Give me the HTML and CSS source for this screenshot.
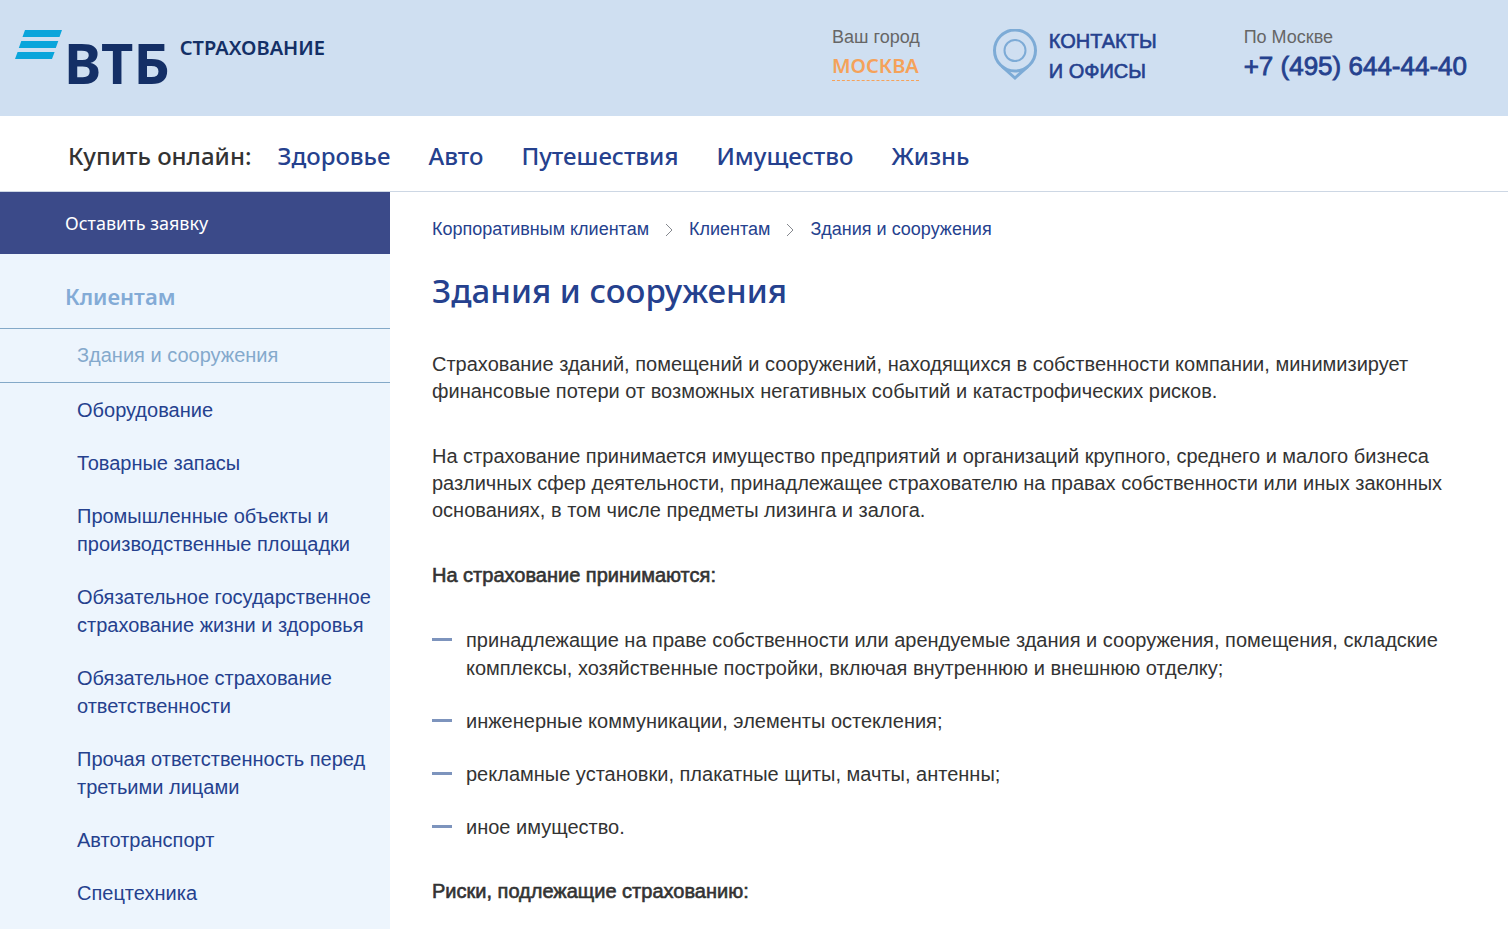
FILE: index.html
```
<!DOCTYPE html>
<html lang="ru">
<head>
<meta charset="utf-8">
<meta name="viewport" content="width=device-width, initial-scale=1">
<title>Здания и сооружения — ВТБ Страхование</title>
<link rel="stylesheet" href="styles.css">
</head>
<body>
<header class="header">
  <a class="logo" href="#">
    <svg class="logo-mark" width="48" height="30" viewBox="0 0 48 30" aria-hidden="true">
      <path d="M10 0H47L44.500 7H7.500ZM6.300 11H43.300L40.800 18H3.800ZM2.600 22H39.600L37 29H0Z" fill="#0aa5db"/>
    </svg>
    <span class="logo-name">ВТБ</span>
    <span class="logo-sub">СТРАХОВАНИЕ</span>
  </a>
  <div class="city">
    <span class="caption">Ваш город</span>
    <a class="city-link" href="#">МОСКВА</a>
  </div>
  <a class="contacts" href="#">
    <svg class="pin" width="44" height="52" viewBox="0 0 44 52" fill="none" stroke="#7dabd6" aria-hidden="true">
      <circle cx="22" cy="21.500" r="20.500" stroke-width="3"/>
      <circle cx="22" cy="21.500" r="10.500" stroke-width="2"/>
      <path d="M9 37.500L22 49L35 37.500" stroke-width="3"/>
    </svg>
    <span>КОНТАКТЫ<br>И ОФИСЫ</span>
  </a>
  <div class="phone">
    <span class="caption">По Москве</span>
    <a class="phone-link" href="tel:+74956444440">+7 (495) 644-44-40</a>
  </div>
</header>
<nav class="nav" aria-label="Купить онлайн">
  <span class="nav-title">Купить онлайн:</span>
  <a href="#">Здоровье</a>
  <a href="#">Авто</a>
  <a href="#">Путешествия</a>
  <a href="#">Имущество</a>
  <a href="#">Жизнь</a>
</nav>
<div class="layout">
  <aside class="sidebar">
    <a class="request" href="#">Оставить заявку</a>
    <h2 class="side-title">Клиентам</h2>
    <ul class="menu">
      <li class="active"><a href="#" aria-current="page">Здания и сооружения</a></li>
      <li><a href="#">Оборудование</a></li>
      <li><a href="#">Товарные запасы</a></li>
      <li><a href="#">Промышленные объекты и производственные площадки</a></li>
      <li><a href="#">Обязательное государственное страхование жизни и здоровья</a></li>
      <li><a href="#">Обязательное страхование ответственности</a></li>
      <li><a href="#">Прочая ответственность перед третьими лицами</a></li>
      <li><a href="#">Автотранспорт</a></li>
      <li><a href="#">Спецтехника</a></li>
    </ul>
  </aside>
  <main class="content">
    <nav class="crumbs" aria-label="Навигация">
      <a href="#">Корпоративным клиентам</a>
      <svg width="8" height="14" viewBox="0 0 8 14" aria-hidden="true"><path d="M1 1L7 7L1 13" fill="none" stroke="#85888e"/></svg>
      <a href="#">Клиентам</a>
      <svg width="8" height="14" viewBox="0 0 8 14" aria-hidden="true"><path d="M1 1L7 7L1 13" fill="none" stroke="#85888e"/></svg>
      <a href="#">Здания и сооружения</a>
    </nav>
    <h1>Здания и сооружения</h1>
    <p>Страхование зданий, помещений и сооружений, находящихся в собственности компании, минимизирует финансовые потери от возможных негативных событий и катастрофических рисков.</p>
    <p>На страхование принимается имущество предприятий и организаций крупного, среднего и малого бизнеса различных сфер деятельности, принадлежащее страхователю на правах собственности или иных законных основаниях, в том числе предметы лизинга и залога.</p>
    <h3>На страхование принимаются:</h3>
    <ul class="dashes">
      <li>принадлежащие на праве собственности или арендуемые здания и сооружения, помещения, складские комплексы, хозяйственные постройки, включая внутреннюю и внешнюю отделку;</li>
      <li>инженерные коммуникации, элементы остекления;</li>
      <li>рекламные установки, плакатные щиты, мачты, антенны;</li>
      <li>иное имущество.</li>
    </ul>
    <h3>Риски, подлежащие страхованию:</h3>
  </main>
</div>
</body>
</html>
```
FILE: styles.css
```
* { box-sizing: border-box; }
body {
  margin: 0;
  background: #fff;
  color: #333;
  font: 20px/27px "Liberation Sans", Arial, sans-serif;
}
a { color: #25418e; text-decoration: none; }
ul { list-style: none; margin: 0; padding: 0; }

.header {
  display: flex;
  align-items: flex-start;
  height: 116px;
  padding: 24px 41px 0 15px;
  background: #cfdff1;
}
.logo {
  display: flex;
  align-items: flex-start;
  margin-right: auto;
  color: #142f66;
  font-family: "Noto Sans", sans-serif;
  font-weight: 700;
}
.logo-mark { margin: 6px 1px 0 0; }
.logo-name { font-size: 56px; line-height: 76px; }
.logo-sub { margin-left: 10px; font-size: 20px; line-height: 48px; font-weight: 600; }
.caption { display: block; color: #666; font-size: 18px; line-height: 26px; }
.city { margin-right: 73px; }
.city-link {
  display: inline-block;
  padding-top: 2px;
  border-bottom: 1px dashed #f5a25a;
  color: #f5a25a;
  font: 600 20px/28px "Noto Sans", sans-serif;
}
.contacts {
  display: flex;
  gap: 12px;
  margin-right: 87px;
  font-size: 20px;
  line-height: 30px;
  -webkit-text-stroke: 0.03em;
}
.contacts span { padding-top: 2px; }
.pin { margin-top: 5px; }
.phone-link { display: block; font-size: 26px; line-height: 32px; -webkit-text-stroke: 0.03em; }

.nav {
  display: flex;
  align-items: center;
  gap: 38px;
  height: 76px;
  padding: 4px 68px 0;
  border-bottom: 1px solid #cdd7e4;
  font: 500 24px/36px "Noto Sans", sans-serif;
}
.nav-title { margin-right: -12px; }

.layout { display: grid; grid-template-columns: 390px 1fr; }
.sidebar { padding-bottom: 24px; background: #edf5fd; }
.request {
  display: block;
  padding: 0 65px;
  background: #3b4a89;
  color: #fff;
  font: 18px/62px "Noto Sans", sans-serif;
}
.side-title {
  margin: 0;
  padding: 24px 65px 14px;
  color: #83abd6;
  font: 600 22px/36px "Noto Sans", sans-serif;
}
.menu li { padding: 0 16px 25px 77px; line-height: 28px; }
.menu .active {
  margin-bottom: 13px;
  padding-top: 12px;
  padding-bottom: 13px;
  border-top: 1px solid #84a9c8;
  border-bottom: 1px solid #84a9c8;
}
.menu .active a { color: #84a9cc; }

.content { padding: 24px 60px 24px 42px; }
.crumbs { display: flex; align-items: center; gap: 16px; font-size: 18px; }
h1 { margin: 24px 0 36px; color: #25418e; font: 500 33px/48px "Noto Sans", sans-serif; }
p { margin: 0 0 38px; }
h3 { margin: 0 0 37px; font-size: 20px; font-weight: 400; -webkit-text-stroke: 0.03em; }
.dashes { margin-bottom: 37px; }
.dashes li { display: grid; grid-template-columns: 20px 1fr; gap: 14px; margin-bottom: 25px; line-height: 28px; }
.dashes li::before { content: ""; height: 3px; margin-top: 12px; background: #7d94bd; }
```
